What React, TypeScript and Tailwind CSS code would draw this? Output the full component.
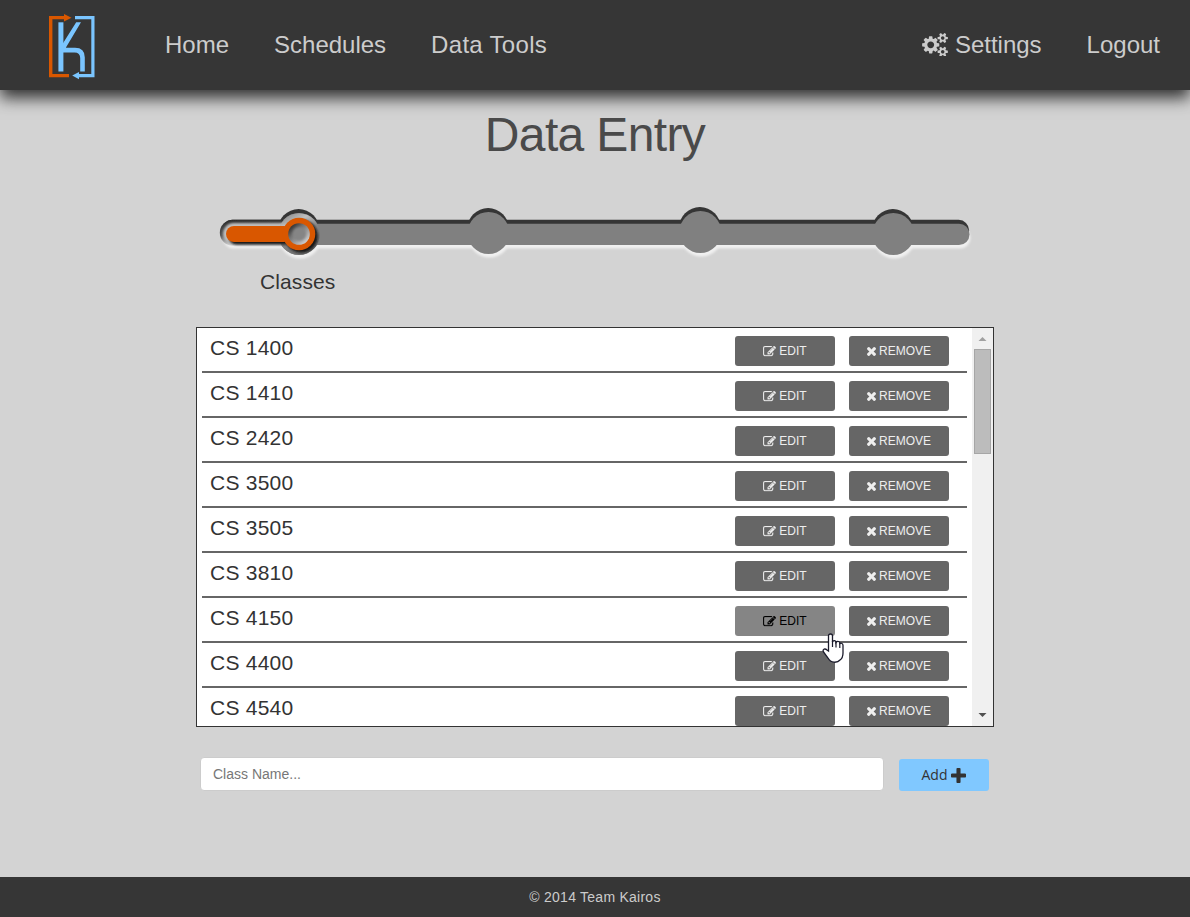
import React from "react";

const GEAR_SMALL =
  "v140q0 16-149 31-12 27-30 52 51 113 51 138 0 4-4 7-122 71-124 71-8 0-46-47t-52-68q-20 2-30 2t-30-2q-14 21-52 68t-46 47q-2 0-124-71-4-3-4-7 0-25 51-138-18-25-30-52-149-15-149-31v-140q0-16 149-31 13-29 30-52-51-113-51-138 0-4 4-7 4-2 35-20t59-34 30-16q8 0 46 46.5t52 67.5q20-2 30-2t30 2q51-71 92-112l6-2q4 0 124 70 4 3 4 7 0 25-51 138 17 23 30 52 149 15 149 31z";

function CogsIcon() {
  return (
    <svg viewBox="0 0 1920 1792" className="mb-[3px] h-6 w-[26px] shrink-0" fill="currentColor">
      <path
        d={
          "M896 960q0-106-75-181t-181-75-181 75-75 181 75 181 181 75 181-75 75-181zm768 512q0-52-38-90t-90-38-90 38-38 90q0 53 37.5 90.5t90.5 37.5 90.5-37.5 37.5-90.5zm0-1024q0-52-38-90t-90-38-90 38-38 90q0 53 37.5 90.5t90.5 37.5 90.5-37.5 37.5-90.5zm-384 421v185q0 10-7 19.5t-16 10.5l-155 24q-11 35-32 76 34 48 90 115 7 11 7 20 0 12-7 19-23 30-82.5 89.5t-78.5 59.5q-11 0-21-7l-115-90q-37 19-77 31-11 108-23 155-7 24-30 24h-186q-11 0-20-7.5t-10-17.5l-23-153q-34-10-75-31l-118 89q-7 7-20 7-11 0-21-8-144-133-144-160 0-9 7-19 10-14 41-53t47-61q-23-44-35-82l-152-24q-10-1-17-9.5t-7-19.5v-185q0-10 7-19.5t16-10.5l155-24q11-35 32-76-34-48-90-115-7-11-7-20 0-12 7-20 22-30 82-89t79-59q11 0 21 7l115 90q34-18 77-32 11-108 23-154 7-24 30-24h186q11 0 20 7.5t10 17.5l23 153q34 10 75 31l118-89q8-7 20-7 11 0 21 8 144 133 144 160 0 8-7 19-12 16-42 54t-45 60q23 48 34 82l152 23q10 2 17 10.5t7 19.5zm640 533" +
          GEAR_SMALL +
          "M1920 378" +
          GEAR_SMALL
        }
      />
    </svg>
  );
}

function EditIcon() {
  return (
    <svg viewBox="0 128 1792 1536" className="h-[11px] w-[13px] shrink-0" fill="currentColor" stroke="currentColor" strokeWidth="36">
      <path d="M888 1184l116-116-152-152-116 116v56h96v96h56zm440-720q-16-16-33 1l-350 350q-17 17-1 33t33-1l350-350q17-17 1-33zm80 594v190q0 119-84.5 203.5t-203.5 84.5h-832q-119 0-203.5-84.5t-84.5-203.5v-832q0-119 84.5-203.5t203.5-84.5h832q63 0 117 25 15 7 18 23 3 17-9 29l-49 49q-14 14-32 8-23-6-45-6h-832q-66 0-113 47t-47 113v832q0 66 47 113t113 47h832q66 0 113-47t47-113v-126q0-13 9-22l64-64q15-15 35-7t20 29zm-96-738l288 288-672 672h-288v-288zm444 132l-92 92-288-288 92-92q28-28 68-28t68 28l152 152q28 28 28 68t-28 68z" />
    </svg>
  );
}

function TimesIcon() {
  return (
    <svg viewBox="302 366 1188 1188" className="size-[9px] shrink-0" fill="currentColor" stroke="currentColor" strokeWidth="40">
      <path d="M1490 1322q0 40-28 68l-136 136q-28 28-68 28t-68-28l-294-294-294 294q-28 28-68 28t-68-28l-136-136q-28-28-28-68t28-68l294-294-294-294q-28-28-28-68t28-68l136-136q28-28 68-28t68 28l294 294 294-294q28-28 68-28t68 28l136 136q28 28 28 68t-28 68l-294 294 294 294q28 28 28 68z" />
    </svg>
  );
}

function PlusIcon() {
  return (
    <svg viewBox="192 128 1408 1408" className="size-[15px] shrink-0" fill="currentColor">
      <path d="M1600 736v192q0 40-28 68t-68 28h-416v416q0 40-28 68t-68 28h-192q-40 0-68-28t-28-68v-416h-416q-40 0-68-28t-28-68v-192q0-40 28-68t68-28h416v-416q0-40 28-68t68-28h192q40 0 68 28t28 68v416h416q40 0 68 28t28 68z" />
    </svg>
  );
}

function Logo() {
  return (
    <svg viewBox="0 0 48 66" className="h-[66px] w-12" fill="none">
      <path d="M17 3.6H2.7V61.6H21" stroke="#d95700" strokeWidth="3.4" />
      <path d="M16 0L23.5 3.7L16 7.6Z" fill="#d95700" />
      <path d="M27 3.6H44.9V61.6H30" stroke="#7ac5ff" strokeWidth="3.2" />
      <path d="M31 58L24.2 61.6L31 65.3Z" fill="#7ac5ff" />
      <path d="M12.9 8.3V57.5" stroke="#7ac5ff" strokeWidth="5" />
      <path d="M28.2 8.3H33L17.8 33.8H27Q36.8 33.8 36.8 43.5V57.5H32.2V44Q32.2 38.4 26.5 38.4H12V34Z" fill="#7ac5ff" />
    </svg>
  );
}

function Groove() {
  return (
    <>
      <rect x="222" y="223.7" width="747.5" height="21.3" rx="10.5" />
      <circle cx="299" cy="234" r="21" />
      <circle cx="488.5" cy="233" r="21" />
      <circle cx="700.3" cy="232" r="21" />
      <circle cx="893.3" cy="234" r="21" />
    </>
  );
}

function ProgressTrack() {
  return (
    <svg viewBox="210 200 770 64" className="h-16 w-[770px]">
      <defs>
        <filter id="soft" x="-5%" y="-30%" width="110%" height="160%">
          <feGaussianBlur stdDeviation="0.8" />
        </filter>
        <filter id="crisp" x="-5%" y="-30%" width="110%" height="160%">
          <feGaussianBlur stdDeviation="0.45" />
        </filter>
        <filter id="softer" x="-20%" y="-50%" width="140%" height="200%">
          <feGaussianBlur stdDeviation="1.3" />
        </filter>
        <linearGradient id="rim" x1="0" y1="0" x2="0.6" y2="1">
          <stop offset="0" stopColor="#777" />
          <stop offset="0.35" stopColor="#c0c0c0" />
          <stop offset="0.6" stopColor="#888" />
          <stop offset="1" stopColor="#666" />
        </linearGradient>
        <linearGradient id="edge" x1="0" y1="0" x2="0.15" y2="1">
          <stop offset="0" stopColor="#2c2c2c" />
          <stop offset="0.6" stopColor="#555" />
          <stop offset="1" stopColor="#ddd" />
        </linearGradient>
        <linearGradient id="hole" x1="0.1" y1="0.1" x2="0.85" y2="0.9">
          <stop offset="0" stopColor="#2a2a2a" />
          <stop offset="0.35" stopColor="#707070" />
          <stop offset="1" stopColor="#d0d0d0" />
        </linearGradient>
      </defs>
      <g fill="#f0f0f0" filter="url(#soft)" transform="translate(1 3.6)"><Groove /></g>
      <g fill="#353535" filter="url(#crisp)" transform="translate(-0.4 -3.9)"><Groove /></g>
      <g fill="#808080"><Groove /></g>
      <g>
        <rect x="219.8" y="219.8" width="78" height="26" rx="13" fill="url(#edge)" filter="url(#crisp)" />
        <rect x="223" y="223" width="76" height="21.5" rx="10.7" fill="#bdbdbd" filter="url(#soft)" />
        <circle cx="299" cy="234" r="20.8" fill="url(#rim)" />
        <rect x="280" y="224.5" width="14" height="18" fill="#bdbdbd" filter="url(#softer)" />
        <g fill="#151515" filter="url(#softer)">
          <rect x="229" y="229" width="64" height="15.5" rx="7.5" />
          <circle cx="301.2" cy="236.2" r="16.4" />
        </g>
        <rect x="226" y="226" width="66" height="16" rx="8" fill="#d95700" />
        <circle cx="299" cy="234" r="16.3" fill="#d95700" />
        <circle cx="299" cy="234" r="10.8" fill="url(#hole)" />
        <circle cx="299.3" cy="234" r="6.8" fill="#858585" filter="url(#softer)" />
      </g>
    </svg>
  );
}

function HandCursor() {
  return (
    <svg viewBox="0 0 22 30" className="absolute top-[27px] left-[87px] z-10 h-[30px] w-[22px]">
      <path
        d="M6.5 18V3Q6.5 1 8.5 1Q10.5 1 10.5 3V9Q11 7.5 12.5 7.7Q14 8 14 9.5Q15 8 16.5 8.5Q18 9 18 10.5Q19 9.7 20 10.5Q21 11 21 12.5V20Q21 25 18 27Q16 29.5 12 29.2Q8 28.8 6 25L1.5 19Q0.5 17 2 16.2Q3.5 15.6 5 17Z"
        fill="white"
        stroke="#1b1b2b"
        strokeWidth="1.3"
      />
      <path d="M10.5 8V14M14 9V14.5M17.8 10V15" stroke="#1b1b2b" strokeWidth="1.2" />
    </svg>
  );
}

const classes = ["CS 1400", "CS 1410", "CS 2420", "CS 3500", "CS 3505", "CS 3810", "CS 4150", "CS 4400", "CS 4540"];

function ClassRow({ name, hovered }: { name: string; hovered: boolean }) {
  return (
    <li className="flex h-[45px] shrink-0 items-start border-b-2 border-[#666] pr-[18px] pl-2">
      <span className="mt-[5px] flex-1 text-[21px] leading-[30px] tracking-[0.25px] text-[#333]">{name}</span>
      <div className="relative mt-2 flex gap-3.5 text-xs">
        <button
          className={
            hovered
              ? "flex h-[30px] w-[100px] items-center justify-center gap-[3px] rounded-[3px] bg-[#858585] text-black"
              : "flex h-[30px] w-[100px] items-center justify-center gap-[3px] rounded-[3px] bg-[#666] text-[#eee]"
          }
        >
          <EditIcon />
          EDIT
        </button>
        <button className="flex h-[30px] w-[100px] items-center justify-center gap-[3px] rounded-[3px] bg-[#666] text-[#eee]">
          <TimesIcon />
          REMOVE
        </button>
        {hovered && <HandCursor />}
      </div>
    </li>
  );
}

function ScrollBar() {
  return (
    <div className="flex w-[21px] flex-col items-center bg-[#f0f0f0]">
      <svg viewBox="0 0 21 21" className="size-[21px] shrink-0">
        <path d="M6.5 13L10.5 9L14.5 13Z" fill="#a0a0a0" />
      </svg>
      <div className="h-[105px] w-[17px] border border-[#a6a6a6] bg-[#bcbcbc]" />
      <div className="flex-1" />
      <svg viewBox="0 0 21 21" className="size-[21px] shrink-0">
        <path d="M6.5 8L10.5 12L14.5 8Z" fill="#505050" />
      </svg>
    </div>
  );
}

export default function App() {
  return (
    <div className="flex h-[917px] flex-col overflow-hidden bg-[#d3d3d3] font-['Liberation_Sans',Arial,sans-serif]">
      <header className="flex h-[90px] shrink-0 items-center bg-[#363636] pr-[30px] pl-12 text-2xl text-[#ccc] shadow-[0_8px_15px_0_#333]">
        <div className="mt-1">
          <Logo />
        </div>
        <nav className="ml-[69px] flex flex-1 gap-[45px]">
          <a>Home</a>
          <a>Schedules</a>
          <a className="tracking-[0.3px]">Data Tools</a>
          <a className="ml-auto flex items-center gap-[7px]">
            <CogsIcon />
            Settings
          </a>
          <a>Logout</a>
        </nav>
      </header>

      <main className="flex flex-1 flex-col items-center">
        <h1 className="mt-[17px] text-[48px] leading-[56px] tracking-[-0.65px] text-[#4a4a4a]">Data Entry</h1>
        <div className="mt-[37px]">
          <ProgressTrack />
        </div>
        <div className="flex w-[798px] pl-16">
          <span className="mt-1 text-[21px] leading-[28px] tracking-[0.1px] text-[#333]">Classes</span>
        </div>

        <section className="mt-[31px] flex h-[400px] w-[798px] shrink-0 border border-[#333] bg-white">
          <ul className="flex flex-1 flex-col overflow-hidden pr-[5px] pl-[5px]">
            {classes.map((name) => (
              <ClassRow key={name} name={name} hovered={name === "CS 4150"} />
            ))}
          </ul>
          <ScrollBar />
        </section>

        <form className="mt-[30px] flex w-[790px] items-start gap-[15px] text-sm">
          <input
            className="h-[34px] w-[684px] rounded-[4px] border border-[#ccc] bg-white px-3 text-sm placeholder:text-[#777]"
            placeholder="Class Name..."
          />
          <button
            type="button"
            className="mt-0.5 flex h-8 w-[90px] items-center justify-center gap-1 rounded-[3px] bg-[#80c8ff] font-['Open_Sans','Noto_Sans',sans-serif] text-[#333]"
          >
            Add
            <PlusIcon />
          </button>
        </form>
      </main>

      <footer className="flex h-10 shrink-0 items-center justify-center bg-[#363636] text-sm tracking-[0.25px] text-[#ccc]">
        © 2014 Team Kairos
      </footer>
    </div>
  );
}
